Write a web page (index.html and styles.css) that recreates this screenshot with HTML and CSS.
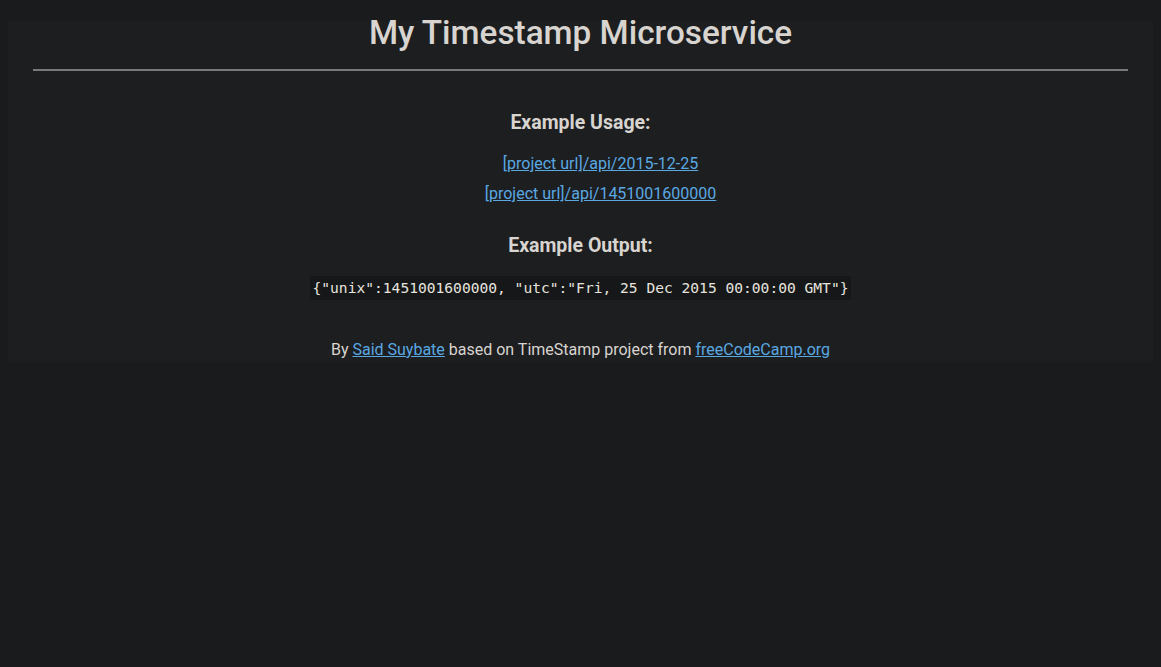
FILE: index.html
```html
<!DOCTYPE html>
<html lang="en">
<head>
<meta charset="utf-8">
<title>Timestamp Microservice</title>
<link rel="stylesheet" href="styles.css">
</head>
<body>
<div class="container">
  <h1 class="title">My Timestamp Microservice</h1>
  <hr class="rule">
  <section class="section">
    <h3 class="heading">Example Usage:</h3>
    <ul class="links">
      <li><a href="#" class="link">[project url]/api/2015-12-25</a></li>
      <li><a href="#" class="link">[project url]/api/1451001600000</a></li>
    </ul>
    <h3 class="heading heading-output">Example Output:</h3>
    <p class="output"><code class="code">{"unix":1451001600000, "utc":"Fri, 25 Dec 2015 00:00:00 GMT"}</code></p>
  </section>
  <p class="footer">By <a href="#" class="link">Said Suybate</a> based on TimeStamp project from <a href="#" class="link">freeCodeCamp.org</a></p>
</div>
</body>
</html>
```

FILE: styles.css
```css
html, body {
  background: #1a1b1d;
}
body {
  margin: 8px;
  font-family: Roboto, "Liberation Sans", sans-serif;
  color: #d8d4cf;
}
.container {
  display: flow-root;
  margin-top: 13px;
  background: #1d1e20;
  text-align: center;
}
.title {
  margin: -7px 0 0;
  font-size: 33.3px;
  line-height: 38px;
  font-weight: 500;
}
.rule {
  border: 0;
  height: 2px;
  background: #77797b;
  margin: 17px 25px 0;
}
.section {
  margin-top: 40px;
}
.heading {
  margin: 0;
  font-size: 19.5px;
  line-height: 24px;
  font-weight: 700;
}
.links {
  list-style: none;
  margin: 14px 0 0;
  padding: 0 0 0 40px;
  font-size: 16px;
  line-height: 30px;
}
.link {
  color: #5aa8e2;
  text-decoration: underline;
}
.heading-output {
  margin-top: 25px;
}
.output {
  margin: 18px 0 0;
  line-height: 24px;
}
.code {
  display: inline-block;
  font-family: "DejaVu Sans Mono", "Liberation Mono", monospace;
  font-size: 14.6px;
  line-height: 24px;
  padding: 0 3px;
  background: #161719;
  color: #e6e3de;
}
.footer {
  margin: 38px 0 0;
  font-size: 16px;
  line-height: 24px;
}
```
